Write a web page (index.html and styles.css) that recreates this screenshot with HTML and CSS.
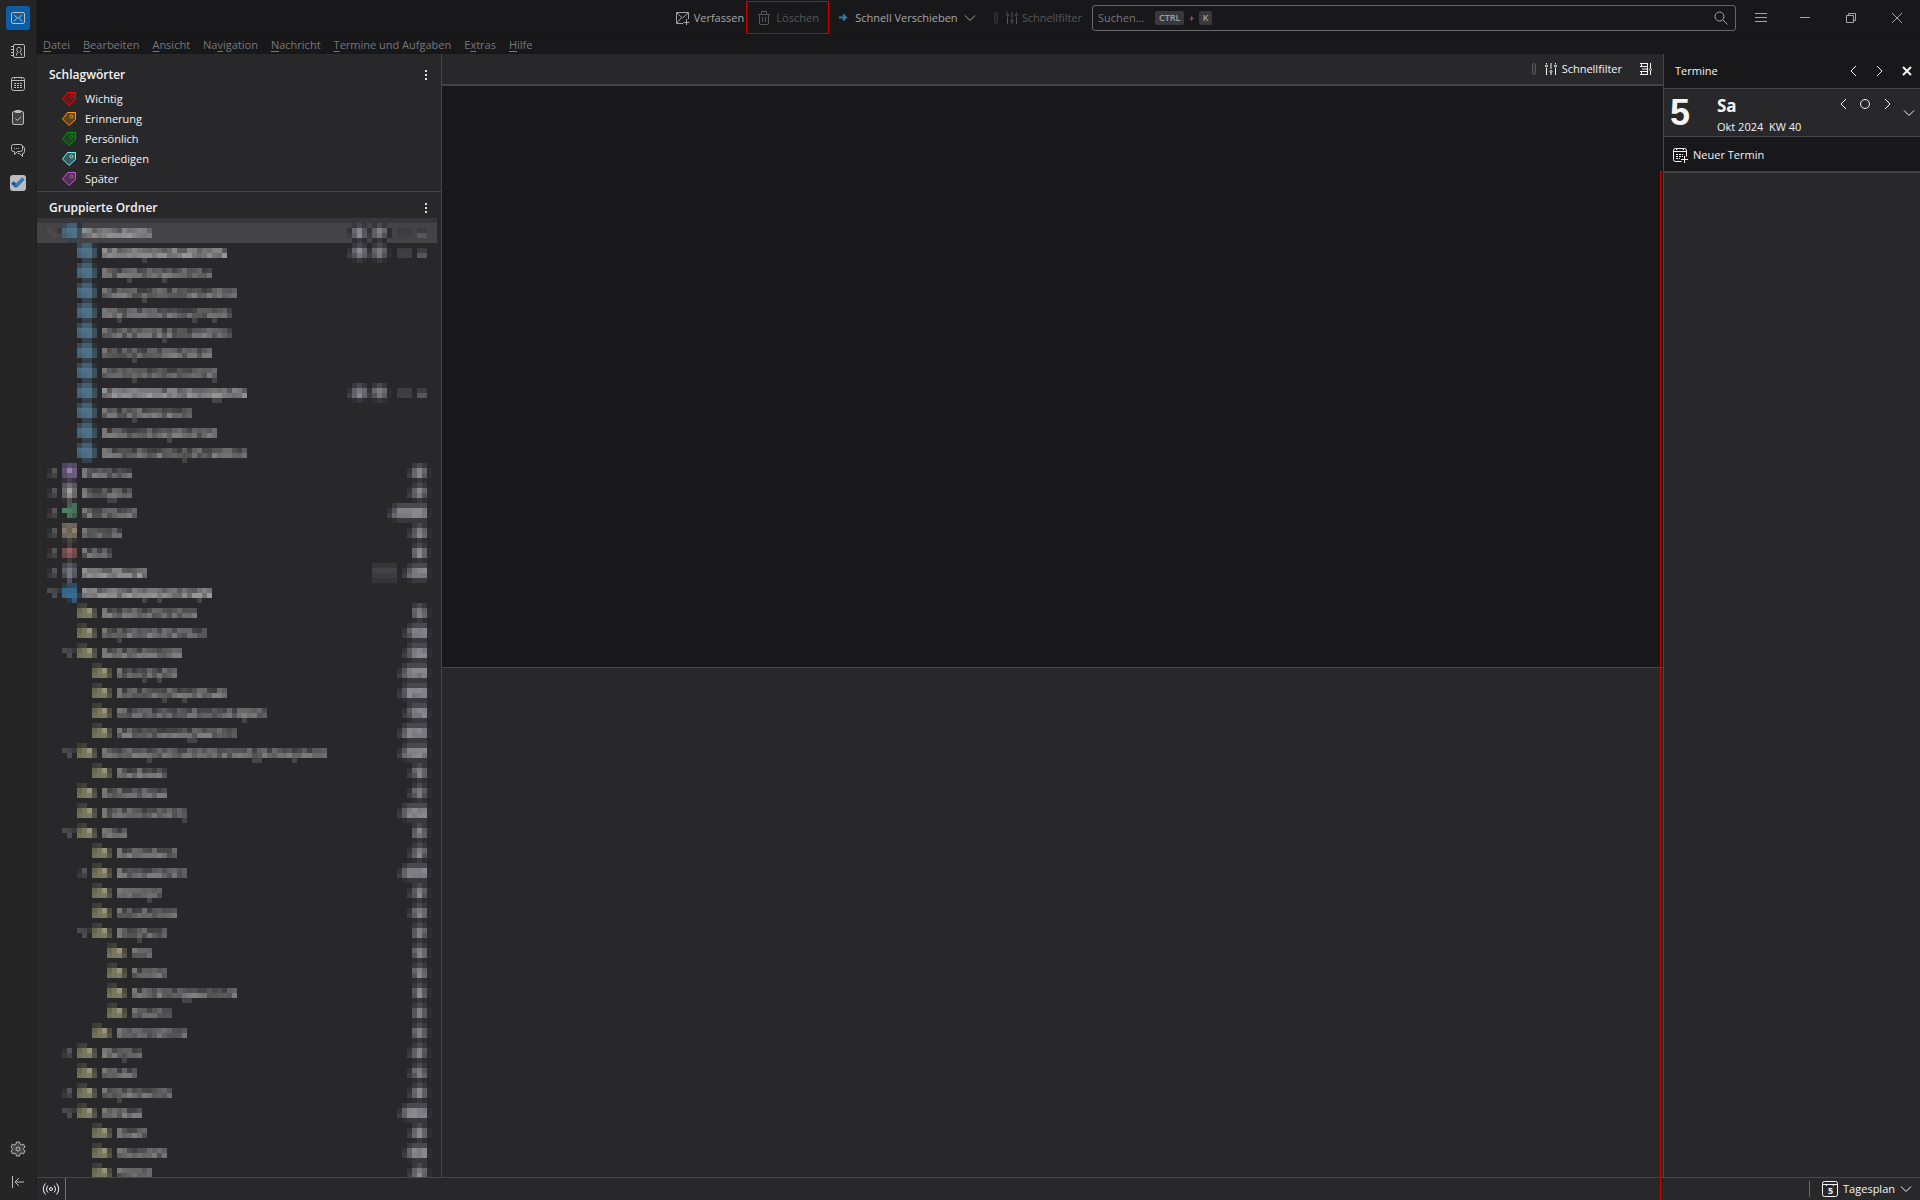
FILE: index.html
```html
<!DOCTYPE html>
<html lang="de">
<head>
    <meta charset="UTF-8">
    <meta name="viewport" content="width=device-width, initial-scale=1.0">
    <title>Posteingang</title>
    <link rel="stylesheet" href="styles.css">
</head>
<body>
    <div class="app">
        <nav class="spaces">
            <button class="space active" aria-label="E-Mail">
                <svg width="16" height="16" viewBox="0 0 16 16"><rect x="1.5" y="2.5" width="13" height="11" rx="1.5"/><path d="M4 5l4 3.5L12 5M4 11.500l2.500-3M12 11.500l-2.500-3"/></svg>
            </button>
            <button class="space" aria-label="Adressbuch">
                <svg width="16" height="16" viewBox="0 0 16 16"><rect x="3.5" y="1.5" width="11" height="13" rx="1.5"/><path d="M1 3.500h3M1 6.500h3M1 9.500h3M1 12.500h3M6.500 12.500V11L8 9.500l-1-2V5.500L8 4.500h2l1 1v2l-1 2 1.500 1.500v1.500"/></svg>
            </button>
            <button class="space" aria-label="Kalender">
                <svg width="16" height="16" viewBox="0 0 16 16"><rect x="1.5" y="1.5" width="13" height="13" rx="2"/><path d="M2 4.500h12M4.500 1v2M11.500 1v2"/><path d="M4 7.500h8M4 9.500h8M4 11.500h8" stroke-dasharray="2 1"/></svg>
            </button>
            <button class="space" aria-label="Aufgaben">
                <svg width="16" height="16" viewBox="0 0 16 16"><rect x="2.5" y="2.5" width="11" height="13" rx="1.5" fill="#444"/><path d="M5.500 1.500h5v2h-5zM5.500 9.500l2 2 3.500-4"/></svg>
            </button>
            <button class="space" aria-label="Chat">
                <svg width="16" height="16" viewBox="0 0 16 16"><path d="M3.500 2.500h7a2 2 0 0 1 2 2v3a2 2 0 0 1-2 2h-3l-3 3v-3h-1a2 2 0 0 1-2-2v-3a2 2 0 0 1 2-2zM12.500 4.500a2 2 0 0 1 2 2v3a2 2 0 0 1-2 2v3l-3-3h-2"/><path d="M4 6.500h6" stroke-dasharray="1 1"/></svg>
            </button>
            <button class="space" aria-label="To Do">
                <svg width="16" height="16" viewBox="0 0 16 16"><rect x="0" y="0" width="16" height="16" rx="3" fill="#bcbcbc" stroke="none"/><path d="M2.500 7.500l4 4" stroke="#1b4f92" stroke-width="3.5"/><path d="M5.500 11.500l8-8" stroke="#2b7bbd" stroke-width="3.5"/></svg>
            </button>
            <button class="space settings" aria-label="Einstellungen">
                <svg width="16" height="16" viewBox="0 0 16 16"><path fill="#444" d="M6.500 1h3l.5 2 1.500 1 2-.8L15 6l-1.500 1.500v1L15 10l-1.500 2.800-2-.8-1.500 1-.5 2h-3L6 13l-1.500-1-2 .8L1 10l1.500-1.500v-1L1 6l1.500-2.800 2 .8L6 3z"/><circle cx="8" cy="8" r="2"/></svg>
            </button>
            <button class="space" aria-label="Leiste einklappen">
                <svg width="16" height="16" viewBox="0 0 16 16"><path d="M2.500 2v12M14 8H5M9 4L5 8l4 4"/></svg>
            </button>
        </nav>

        <div class="window">
            <header class="titlebar">
                <button class="tool">
                    <svg width="16" height="16" viewBox="0 0 16 16"><path d="M9 13.500H2.500v-11h12V9M3 3l5.500 5L14 3M3 13l4-5M12.500 9v6M9.500 12.500h6"/></svg>
                    Verfassen
                </button>
                <button class="tool delete" disabled>
                    <svg width="16" height="16" viewBox="0 0 16 16"><path d="M2 4.500h12M5.500 4V1.500h5V4M3.500 5v8.500a1 1 0 0 0 1 1h7a1 1 0 0 0 1-1V5M6.500 7v5M9.500 7v5"/></svg>
                    Löschen
                </button>
                <button class="tool move">
                    <svg class="arrow" width="12" height="12" viewBox="0 0 12 12"><path d="M2 5.500h7M6 2.500l3 3-3 3"/></svg>
                    Schnell Verschieben
                    <svg width="12" height="12" viewBox="0 0 12 12"><path d="M1 3.500l5 5 5-5"/></svg>
                </button>
                <button class="tool filter" disabled>
                    <span class="grip"></span>
                    <svg width="12" height="12" viewBox="0 0 12 12"><path d="M1.500 0v1M1.500 5v7M6 0v6M6 10v2M10.500 0v1M10.500 5v7"/><circle cx="1.5" cy="3" r="1"/><circle cx="6" cy="8.5" r="1"/><circle cx="10.5" cy="3" r="1"/></svg>
                    Schnellfilter
                </button>
                <label class="search">
                    <input type="search" placeholder="Suchen…" aria-label="Suchen">
                    <span class="keys"><kbd>CTRL</kbd> + <kbd>K</kbd></span>
                    <svg width="14" height="14" viewBox="0 0 14 14"><circle cx="5.5" cy="5.5" r="4.5"/><path d="M9 9l4.500 4.500"/></svg>
                </label>
                <button class="app-menu" aria-label="Menü">
                    <svg width="14" height="14" viewBox="0 0 14 14"><path d="M1 2.500h12M1 6.500h12M1 10.500h12"/></svg>
                </button>
                <button class="win-btn" aria-label="Minimieren">
                    <svg width="12" height="12" viewBox="0 0 12 12"><path d="M1 5.500h10"/></svg>
                </button>
                <button class="win-btn" aria-label="Verkleinern">
                    <svg width="12" height="12" viewBox="0 0 12 12"><path d="M1.500 3.500h7v7h-7zM3.500 3V1.500h7v7H9"/></svg>
                </button>
                <button class="win-btn" aria-label="Schließen">
                    <svg width="12" height="12" viewBox="0 0 12 12"><path d="M1 1l10 10M11 1L1 11"/></svg>
                </button>
            </header>

            <nav class="menubar">
                <button><u>D</u>atei</button>
                <button><u>B</u>earbeiten</button>
                <button><u>A</u>nsicht</button>
                <button>Na<u>v</u>igation</button>
                <button><u>N</u>achricht</button>
                <button><u>T</u>ermine und Aufgaben</button>
                <button>E<u>x</u>tras</button>
                <button><u>H</u>ilfe</button>
            </nav>

            <div class="panes">
                <aside class="folder-pane">
                    <section class="tags">
                        <div class="pane-head">
                            <h2>Schlagwörter</h2>
                            <button class="more" aria-label="Optionen"><i></i><i></i><i></i></button>
                        </div>
                        <ul>
                            <li class="red"><svg width="16" height="16" viewBox="0 0 16 16"><path d="M6.500 1.500h8v7l-6.500 6-6.500-6.500z"/><circle cx="10.5" cy="5.5" r="1.5"/></svg>Wichtig</li>
                            <li class="orange"><svg width="16" height="16" viewBox="0 0 16 16"><path d="M6.500 1.500h8v7l-6.500 6-6.500-6.500z"/><circle cx="10.5" cy="5.5" r="1.5"/></svg>Erinnerung</li>
                            <li class="green"><svg width="16" height="16" viewBox="0 0 16 16"><path d="M6.500 1.500h8v7l-6.500 6-6.500-6.500z"/><circle cx="10.5" cy="5.5" r="1.5"/></svg>Persönlich</li>
                            <li class="cyan"><svg width="16" height="16" viewBox="0 0 16 16"><path d="M6.500 1.500h8v7l-6.500 6-6.500-6.500z"/><circle cx="10.5" cy="5.5" r="1.5"/></svg>Zu erledigen</li>
                            <li class="purple"><svg width="16" height="16" viewBox="0 0 16 16"><path d="M6.500 1.500h8v7l-6.500 6-6.500-6.500z"/><circle cx="10.5" cy="5.5" r="1.5"/></svg>Später</li>
                        </ul>
                    </section>
                    <section class="folders">
                        <div class="pane-head">
                            <h2>Gruppierte Ordner</h2>
                            <button class="more" aria-label="Optionen"><i></i><i></i><i></i></button>
                        </div>
                        <ul id="folder-tree"></ul>
                    </section>
                </aside>

                <main class="mail">
                    <div class="list-head">
                        <button class="tool">
                            <span class="grip"></span>
                            <svg width="12" height="12" viewBox="0 0 12 12"><path d="M1.500 0v1M1.500 5v7M6 0v6M6 10v2M10.500 0v1M10.500 5v7"/><circle cx="1.5" cy="3" r="1"/><circle cx="6" cy="8.5" r="1"/><circle cx="10.5" cy="3" r="1"/></svg>
                            Schnellfilter
                        </button>
                        <button class="display" aria-label="Anzeige">
                            <svg width="14" height="14" viewBox="0 0 14 14"><path d="M1 1.500h8M1 4.500h8M1 9.500h8M1 12.500h8M2.500 1v3M2.500 10v3M3 7h6M11.500 1v5M11.500 9v4M8.500 1v12"/><circle cx="11.5" cy="7.5" r="1"/></svg>
                        </button>
                    </div>
                    <div class="thread-list"></div>
                    <div class="message"></div>
                </main>

                <aside class="today">
                    <div class="today-head">
                        <h2>Termine</h2>
                        <button aria-label="Zurück"><svg width="12" height="12" viewBox="0 0 12 12"><path d="M9 1L4 6l5 5"/></svg></button>
                        <button aria-label="Weiter"><svg width="12" height="12" viewBox="0 0 12 12"><path d="M4 1l5 5-5 5"/></svg></button>
                        <button class="close" aria-label="Schließen"><svg width="12" height="12" viewBox="0 0 12 12"><path d="M2 2l8 8M10 2l-8 8"/></svg></button>
                    </div>
                    <div class="date">
                        <span class="day">5</span>
                        <div class="date-text">
                            <strong>Sa</strong>
                            <span>Okt 2024 &nbsp;KW 40</span>
                        </div>
                        <div class="day-nav">
                            <button aria-label="Voriger Tag"><svg width="12" height="12" viewBox="0 0 12 12"><path d="M9 1L4 6l5 5"/></svg></button>
                            <button aria-label="Heute"><svg width="12" height="12" viewBox="0 0 12 12"><circle cx="6" cy="6" r="4.5"/></svg></button>
                            <button aria-label="Nächster Tag"><svg width="12" height="12" viewBox="0 0 12 12"><path d="M4 1l5 5-5 5"/></svg></button>
                        </div>
                        <button class="month" aria-label="Monat anzeigen"><svg width="12" height="12" viewBox="0 0 12 12"><path d="M1 3.500l5 5 5-5"/></svg></button>
                    </div>
                    <button class="tool new-event">
                        <svg width="16" height="16" viewBox="0 0 16 16"><path d="M9.500 14.500h-6a2 2 0 0 1-2-2v-9a2 2 0 0 1 2-2h9a2 2 0 0 1 2 2v6M2 4.500h12M4.500 1v2M11.500 1v2M12.500 9v7M9 12.500h7"/><path d="M4 7.500h7M4 9.500h7M4 11.500h4" stroke-dasharray="2 1"/></svg>
                        Neuer Termin
                    </button>
                    <div class="agenda"></div>
                    <div class="marker"></div>
                </aside>
            </div>

            <footer class="statusbar">
                <button class="online" aria-label="Online">
                    <svg width="18" height="14" viewBox="0 0 18 14"><circle cx="9" cy="7" r="1.5"/><path d="M6 3.500a5 5 0 0 0 0 7M12 3.500a5 5 0 0 1 0 7M3.500 1.500a8 8 0 0 0 0 11M14.500 1.500a8 8 0 0 1 0 11"/></svg>
                </button>
                <button class="tool dayplan">
                    <svg width="16" height="16" viewBox="0 0 16 16"><rect x="0.5" y="0.5" width="15" height="15" rx="2"/><path d="M1 3.500h14M4.500 3v2M11.500 3v2"/><text x="6" y="13">5</text></svg>
                    Tagesplan
                    <svg width="12" height="12" viewBox="0 0 12 12"><path d="M1 3.500l5 5 5-5"/></svg>
                </button>
            </footer>
        </div>
    </div>

    <script src="folders.js"></script>
</body>
</html>
```
FILE: folders.js
```js
// level, twisty (o = open, c = closed, - = none), icon, label blocks, badge blocks, bold
const folders = [
    [0, 'o', 'inbox', 14, 'wide', 1],
    [1, '-', 'inbox', 25, 'wide', 1],
    [1, '-', 'inbox', 22, 0, 0],
    [1, '-', 'inbox', 27, 0, 0],
    [1, '-', 'inbox', 26, 0, 0],
    [1, '-', 'inbox', 26, 0, 0],
    [1, '-', 'inbox', 22, 0, 0],
    [1, '-', 'inbox', 23, 0, 0],
    [1, '-', 'inbox', 29, 'wide', 1],
    [1, '-', 'inbox', 18, 0, 0],
    [1, '-', 'inbox', 23, 0, 0],
    [1, '-', 'inbox', 29, 0, 0],
    [0, 'c', 'drafts', 10, 3, 0],
    [0, 'c', 'template', 10, 3, 0],
    [0, 'c', 'sent', 11, 7, 0],
    [0, 'c', 'archive', 8, 3, 0],
    [0, 'c', 'spam', 6, 2, 0],
    [0, 'c', 'trash', 13, 'trash', 1],
    [0, 'o', 'account', 26, 0, 1],
    [1, '-', 'folder', 19, 2, 0],
    [1, '-', 'folder', 21, 4, 0],
    [1, 'o', 'folder', 16, 4, 0],
    [2, '-', 'folder', 12, 5, 0],
    [2, '-', 'folder', 22, 5, 0],
    [2, '-', 'folder', 30, 4, 0],
    [2, '-', 'folder', 24, 5, 0],
    [1, 'o', 'folder', 45, 5, 0],
    [2, '-', 'folder', 10, 3, 0],
    [1, '-', 'folder', 13, 3, 0],
    [1, '-', 'folder', 17, 5, 0],
    [1, 'o', 'folder', 5, 2, 0],
    [2, '-', 'folder', 12, 3, 0],
    [2, 'c', 'folder', 14, 5, 0],
    [2, '-', 'folder', 9, 3, 0],
    [2, '-', 'folder', 12, 3, 0],
    [2, 'o', 'folder', 10, 2, 0],
    [3, '-', 'folder', 4, 2, 0],
    [3, '-', 'folder', 7, 2, 0],
    [3, '-', 'folder', 21, 2, 0],
    [3, '-', 'folder', 8, 2, 0],
    [2, '-', 'folder', 14, 2, 0],
    [1, 'c', 'folder', 8, 3, 0],
    [1, '-', 'folder', 7, 3, 0],
    [1, 'c', 'folder', 14, 3, 0],
    [1, 'o', 'folder', 8, 5, 0],
    [2, '-', 'folder', 6, 3, 0],
    [2, '-', 'folder', 10, 4, 0],
    [2, '-', 'folder', 7, 3, 0]
];

// four lines of blocks per icon, an extra space leaves a block empty
const icons = {
    inbox: ['#3a4a55 #44606f #44606f #2c3439', '#46687e #507289 #507289 #38505f', '#46606f #4a6b80 #4f7186 #3c505c', ' #35424b #35424b '],
    drafts: ['#4f435c #5d4f6b #554863', '#60526e #9680b4 #6e5c82', '#5b4d68 #6b5a7c #6a5a7a', '#35303b #453c50 #35303b'],
    template: ['#555558 #6c6c6e #58585a', '#686868 #a0a0a0 #6c6c6c', '#606060 #8c8c8c #666666', '#303032 #505052 #303032'],
    sent: [' #3c6450 #446e58', '#4a8466 #4a7c62 #467058', ' #42765c #3a5c4b', '  '],
    archive: ['#6c6357 #72685c #6c6357', '#81766a #6b6156 #91836f', '#70675a #776d60 #70675a', '#303030 #4a4541 #35322f'],
    spam: [' #503a3c ', '#704e4f #9a6061 #704e4f', '#6a4748 #885354 #6a4748', ' #40393b '],
    trash: ['#46464d #585862 #46464d', '#5c5c66 #777783 #5c5c66', '#4d4d56 #777783 #555560', ' #50505a '],
    account: ['#303a43 #2e4c64 #2e4c64', '#36658a #36658a #35658a', '#36658a #386b91 #386b91 #294050', ' #293947 #2f587a '],
    folder: ['#3b3b39 #414139  ', '#66664f #77775f #96937a #4b4b40', '#6f6f5a #77775f #7c7c64 #55554a', '   ']
};

let seed = 7;

function rand() {
    seed = (seed * 16807) % 2147483647;
    return seed / 2147483647;
}

function block(x, y, color) {
    return `<rect x="${x * 5}" y="${y * 5}" width="5" height="5" fill="${color}"/>`;
}

function gray(v, blue = 0) {
    v = Math.round(v);
    return `rgb(${v},${v},${v + blue})`;
}

function drawIcon(name, x) {
    return icons[name].map((line, y) =>
        line.split(' ').map((c, i) => c ? block(x + i, y, c) : '').join('')
    ).join('');
}

function drawTwisty(type, x) {
    if (type === 'o') {
        return block(x, 1, '#4b4b4d') + block(x + 1, 1, '#454547') + block(x + 1, 2, '#4c4c4e') + block(x + 2, 1, '#38383a');
    }
    if (type === 'c') {
        return block(x, 1, '#303032') + block(x + 1, 1, '#555557') + block(x, 2, '#39393b') + block(x + 1, 2, '#444446');
    }
    return '';
}

function drawLabel(x, count, bold) {
    const base = bold ? 104 : 78;
    let out = '';
    for (let i = 0; i < count; i++) {
        out += block(x + i, 1, gray(i === 0 ? base + 40 : base - 18 + rand() * 50));
        out += block(x + i, 2, gray(base + rand() * 50));
        if (i > 2 && rand() > 0.93) {
            out += block(x + i, 3, gray(68));
        }
    }
    return out;
}

function drawPill(end, count) {
    const width = Math.max(count, 3);
    let out = '';
    for (let i = 0; i < width; i++) {
        const x = end - width + i;
        const side = i === 0 || (i === width - 1 && width === 3);
        const v = side ? 84 : 118;
        out += block(x, 0, side ? '#38383d' : '#48484e') + block(x, 1, gray(v + rand() * 20, 6));
        out += block(x, 2, gray(v - 4 + rand() * 24, 6)) + block(x, 3, side ? '#2e2e32' : '#38383e');
    }
    if (count > 2) {
        out += block(end - width - 1, 1, '#343438') + block(end - width - 1, 2, '#3d3d43');
    }
    return out + block(end, 1, '#2e2e32') + block(end, 2, '#2e2e32');
}

function drawBadge(badge) {
    if (badge === 'wide') {
        return drawPill(6, 3) + drawPill(10, 3) + [12, 13, 14, 16, 17].map(x =>
            block(x, 1, '#3c3c42') + block(x, 2, x > 14 ? '#55555d' : '#3e3e43')).join('');
    }
    if (badge === 'trash') {
        return [7, 8, 9, 10, 11].map(x => block(x, 0, '#363639') + block(x, 1, '#414146') + block(x, 2, '#3c3c40') + block(x, 3, '#363639')).join('') + drawPill(18, 4);
    }
    return badge ? drawPill(18, badge) : '';
}

document.getElementById('folder-tree').innerHTML = folders.map(([level, twisty, icon, label, badge, bold], i) => {
    const x = 5 + level * 3;
    const labelX = level ? x + 5 : 9;
    const twistyX = level ? x - 3 : 2;
    return `<li class="${i === 0 ? 'selected' : ''}">
        <svg width="300" height="20">${drawTwisty(twisty, twistyX)}${drawIcon(icon, x)}${drawLabel(labelX, label, bold)}</svg>
        <svg width="100" height="20">${drawBadge(badge)}</svg>
    </li>`;
}).join('');
```
FILE: styles.css
```css
* {
    margin: 0;
    padding: 0;
    box-sizing: border-box;
}

body, html {
    height: 100%;
    background: #18181a;
    color: #f4f4f4;
    font-family: "Open Sans", sans-serif;
    font-size: 11px;
    line-height: 16px;
}

button {
    background: none;
    border: none;
    color: inherit;
    font: inherit;
    display: flex;
    align-items: center;
    justify-content: center;
    white-space: nowrap;
}

ul {
    list-style: none;
}

svg {
    flex: none;
    fill: none;
    stroke: currentColor;
}

h2 {
    font-size: 12px;
    font-weight: 600;
}

.app {
    display: flex;
    height: 100vh;
    overflow: hidden;
}

/* Leiste links */
.spaces {
    display: flex;
    flex-direction: column;
    align-items: center;
    flex: none;
    gap: 9px;
    width: 37px;
    padding: 6px 1px 6px 0;
    background: #252525;
    border-right: 1px solid #1f1f20;
    color: #bcbcbc;
}

.space {
    width: 24px;
    height: 24px;
    border-radius: 3px;
}

.space.active {
    background: #0b5ea5;
}

.space.settings {
    margin-top: auto;
}

.window {
    display: flex;
    flex-direction: column;
    flex: 1;
    min-width: 0;
}

/* Titelleiste */
.titlebar {
    display: flex;
    align-items: center;
    justify-content: flex-end;
    height: 35px;
    flex: none;
    padding-top: 1px;
    border-bottom: 1px solid #151516;
    color: #a6a6a7;
}

.tool {
    gap: 4px;
}

.titlebar .tool {
    height: 33px;
}

.titlebar .delete {
    width: 83px;
    margin: 0 8px 0 2px;
    border: 1px solid #cc0000;
}

.tool:disabled {
    color: #565658;
}

.titlebar .move {
    gap: 6px;
}

.arrow {
    color: #3178a8;
    stroke-width: 2;
}

.titlebar .filter {
    margin-left: 18px;
}

.grip {
    width: 4px;
    height: 12px;
    margin-right: 4px;
    border: 1px solid #555;
    border-radius: 2px;
    background: #333;
}

.filter .grip {
    border-color: #333;
    background: #222;
}

.search {
    position: relative;
    display: flex;
    align-items: center;
    flex: 0 1 644px;
    height: 26px;
    margin: 0 13px 0 10px;
    padding: 0 7px 0 5px;
    border: 1px solid #68686c;
    border-radius: 3px;
}

.search input {
    flex: 1;
    border: none;
    outline: none;
    background: none;
    color: inherit;
    font: inherit;
}

.search input::placeholder {
    color: #77777a;
    opacity: 1;
}

.keys {
    position: absolute;
    left: 62px;
    display: flex;
    align-items: center;
    gap: 4px;
    color: #808084;
}

kbd {
    padding: 0 4px;
    border-radius: 2px;
    background: #38383d;
    color: #a0a0a4;
    font-family: "Open Sans", sans-serif;
    font-size: 9px;
    font-weight: 600;
    line-height: 14px;
}

.app-menu {
    width: 24px;
    height: 24px;
    margin-right: 9px;
}

.win-btn {
    width: 46px;
    height: 32px;
}

/* Menü */
.menubar {
    display: flex;
    flex: none;
    gap: 13px;
    height: 19px;
    padding-left: 6px;
    color: #77777a;
}

.menubar u {
    text-underline-offset: 2px;
}

.panes {
    display: flex;
    flex: 1;
    min-height: 0;
}

/* Ordnerliste */
.folder-pane {
    display: flex;
    flex-direction: column;
    flex: none;
    width: 405px;
    overflow: hidden;
    background: #28282a;
    border-right: 1px solid #46464a;
}

.pane-head {
    display: flex;
    align-items: center;
    justify-content: space-between;
    padding: 0 11px 0 12px;
}

.tags .pane-head {
    height: 35px;
    padding-top: 6px;
}

.folders .pane-head {
    height: 31px;
}

.more {
    flex-direction: column;
    gap: 2px;
    width: 8px;
    height: 16px;
}

.more i {
    width: 2px;
    height: 2px;
    background: #e0e0e0;
}

.tags {
    flex: none;
    padding-bottom: 2px;
    border-bottom: 1px solid #46464a;
}

.tags li {
    display: flex;
    align-items: center;
    gap: 8px;
    height: 20px;
    padding-left: 24px;
}

.tags path {
    fill-opacity: 0.25;
}

.red svg { stroke: #f00; fill: #f00; }
.orange svg { stroke: #ff9900; fill: #ff9900; }
.green svg { stroke: #009900; fill: #009900; }
.cyan svg { stroke: #70f4f4; fill: #70f4f4; }
.purple svg { stroke: #c455cc; fill: #c455cc; }

.tags circle {
    fill: none;
}

.folders {
    flex: 1;
    min-height: 0;
    overflow: hidden;
}

.folders li {
    display: flex;
    justify-content: space-between;
    height: 20px;
    margin-right: 4px;
}

.folders li svg {
    stroke: none;
    shape-rendering: crispEdges;
}

.folders .selected {
    background: #444446;
    box-shadow: 0 -5px #37373b;
}

/* Nachrichten */
.mail {
    display: flex;
    flex-direction: column;
    flex: 1;
    min-width: 0;
}

.list-head {
    display: flex;
    align-items: center;
    justify-content: flex-end;
    gap: 17px;
    height: 32px;
    flex: none;
    padding-right: 10px;
    background: #28282a;
    border-bottom: 2px solid #424247;
}

.list-head .tool {
    gap: 5px;
}

.thread-list {
    flex: 582;
    border-bottom: 1px solid #46464a;
}

.message {
    flex: 509;
    background: #28282a;
}

/* Tagesplan */
.today {
    position: relative;
    display: flex;
    flex-direction: column;
    flex: none;
    width: 257px;
    border-left: 1px solid #46464a;
}

.today-head {
    display: flex;
    align-items: center;
    gap: 14px;
    height: 35px;
    padding: 0 7px 0 11px;
    border-bottom: 1px solid #46464a;
}

.today-head h2 {
    flex: 1;
    font-size: 11px;
    font-weight: 400;
}

.today-head .close {
    margin-left: 2px;
    stroke-width: 2;
}

.date {
    display: flex;
    height: 48px;
    padding: 0 5px 0 6px;
    background: #28282a;
    border-bottom: 1px solid #46464a;
}

.day {
    width: 47px;
    font-family: "Liberation Sans", sans-serif;
    font-size: 36px;
    font-weight: bold;
    line-height: 47px;
}

.date-text {
    display: flex;
    flex-direction: column;
    flex: 1;
    padding-top: 6px;
}

.date-text strong {
    font-size: 17px;
    line-height: 22px;
    height: 24px;
}

.day-nav {
    display: flex;
    gap: 10px;
    height: 30px;
    margin-right: 10px;
}

.new-event {
    justify-content: flex-start;
    height: 35px;
    padding: 1px 0 0 8px;
    gap: 5px;
}

.agenda {
    flex: 1;
    background: #28282a;
    border-top: 1px solid #46464a;
}

.marker {
    position: absolute;
    top: 117px;
    right: 0;
    bottom: -23px;
    left: -4px;
    border: solid #cc0000;
    border-width: 1px 0 0 1px;
}

/* Statusleiste */
.statusbar {
    display: flex;
    align-items: center;
    justify-content: space-between;
    height: 23px;
    flex: none;
    background: #28282a;
    border-top: 1px solid #46464a;
}

.online {
    width: 29px;
    height: 22px;
    border-right: 1px solid #77777a;
}

.dayplan {
    gap: 5px;
    height: 16px;
    padding: 0 8px 0 12px;
    border-left: 1px solid #66666a;
}

.dayplan text {
    fill: currentColor;
    stroke: none;
    font-size: 9px;
    font-weight: bold;
}
```
